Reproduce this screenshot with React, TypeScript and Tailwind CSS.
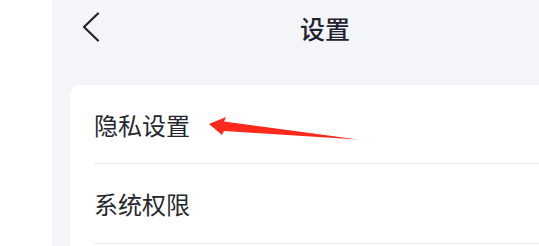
import React from "react";

export default function App() {
  const font = { fontFamily: '"Noto Sans CJK SC", "Noto Sans", sans-serif' };
  return (
    <div className="relative w-[539px] h-[246px] flex overflow-hidden bg-white" style={font}>
      <div className="w-[52px] h-full bg-white" />
      <div className="flex-1 h-full bg-[#f4f5f8] flex flex-col">
        <div className="h-[85px] flex items-start pt-[12px] pl-[29px]">
          <svg width="20" height="30" viewBox="0 0 20 30" className="shrink-0">
            <path d="M17 1.5 L3 15 L17 28.5" fill="none" stroke="#1f2331" strokeWidth="2.2" strokeLinecap="round" strokeLinejoin="round" />
          </svg>
          <span className="ml-[199px] text-[25px] leading-[32px] font-medium text-[#1f2331]">设置</span>
        </div>
        <div className="flex-1 ml-[18px] bg-white rounded-tl-[10px] pl-[24px]">
          <div className="h-[79px] flex items-center border-b border-[#e9e9ec] text-[24px] text-[#25272d] pb-[1px]">
            <span className="mt-[2px]">隐私设置</span>
          </div>
          <div className="h-[80px] flex items-center border-b border-[#e9e9ec] text-[24px] text-[#25272d]">
            <span>系统权限</span>
          </div>
        </div>
      </div>
      <svg className="absolute left-0 top-0 pointer-events-none" width="539" height="246" viewBox="0 0 539 246">
        <polygon points="209,124 226,117 224,121.5 358,139.5 224,131 222,135" fill="#fb2a1c" />
      </svg>
    </div>
  );
}
